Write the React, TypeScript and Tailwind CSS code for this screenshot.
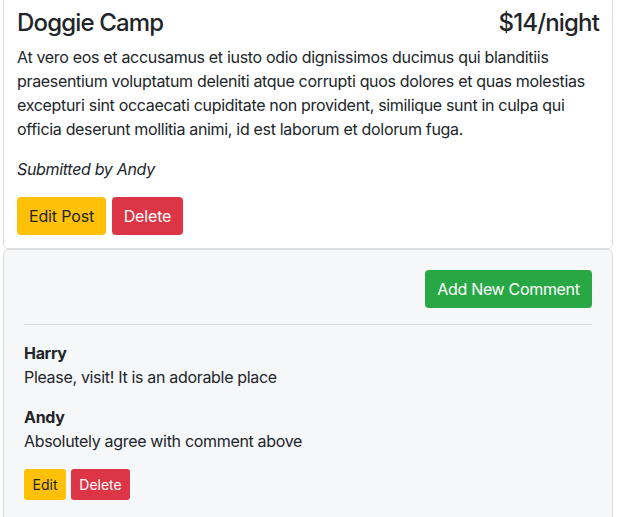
import React from 'react';

const font = { fontFamily: 'Inter, "Liberation Sans", sans-serif' };

const App: React.FC = () => {
  return (
    <div className="w-[617px] h-[517px] overflow-hidden bg-white text-[#212529] tracking-[-0.02em]" style={font}>
      <div className="mx-[3px] mt-[-10px] w-[610px]">
        <div className="border border-[#dfdfdf] rounded-[5px] bg-white px-[13px] pt-[17px] pb-[13px]">
          <div className="flex justify-between items-baseline mb-2">
            <h4 className="text-[24px] leading-[29px] font-medium tracking-[-0.035em]">Doggie Camp</h4>
            <h4 className="text-[24px] leading-[29px] font-medium tracking-[-0.035em]">$14/night</h4>
          </div>
          <p className="text-[16px] leading-6 mb-4">
            At vero eos et accusamus et iusto odio dignissimos ducimus qui blanditiis praesentium voluptatum deleniti atque corrupti quos dolores et quas molestias excepturi sint occaecati cupiditate non provident, similique sunt in culpa qui officia deserunt mollitia animi, id est laborum et dolorum fuga.
          </p>
          <p className="text-[16px] leading-6 italic mb-4">Submitted by Andy</p>
          <div className="flex gap-[6px]">
            <button className="h-[38px] w-[89px] rounded-[4px] bg-[#ffc107] text-[16px] text-[#212529] tracking-[-0.01em]">Edit Post</button>
            <button className="h-[38px] w-[71px] rounded-[4px] bg-[#dc3545] text-[16px] text-white tracking-[-0.01em]">Delete</button>
          </div>
        </div>
        <div className="border border-[#dfdfdf] rounded-t-[5px] bg-[#f6f7f9] px-5 pt-5 pb-6">
          <div className="flex justify-end">
            <button className="h-[38px] w-[167px] rounded-[4px] bg-[#28a745] text-[16px] text-white">Add New Comment</button>
          </div>
          <hr className="my-4 border-t border-[#dcdde0]" />
          <div className="mb-4">
            <div className="text-[16px] leading-6 font-bold">Harry</div>
            <div className="text-[16px] leading-6">Please, visit! It is an adorable place</div>
          </div>
          <div className="mb-4">
            <div className="text-[16px] leading-6 font-bold">Andy</div>
            <div className="text-[16px] leading-6">Absolutely agree with comment above</div>
          </div>
          <div className="flex gap-[5px]">
            <button className="h-[31px] w-[42px] rounded-[3px] bg-[#ffc107] text-[14px] text-[#212529] tracking-normal">Edit</button>
            <button className="h-[31px] w-[59px] rounded-[3px] bg-[#dc3545] text-[14px] text-white tracking-normal">Delete</button>
          </div>
        </div>
      </div>
    </div>
  );
};

export default App;
